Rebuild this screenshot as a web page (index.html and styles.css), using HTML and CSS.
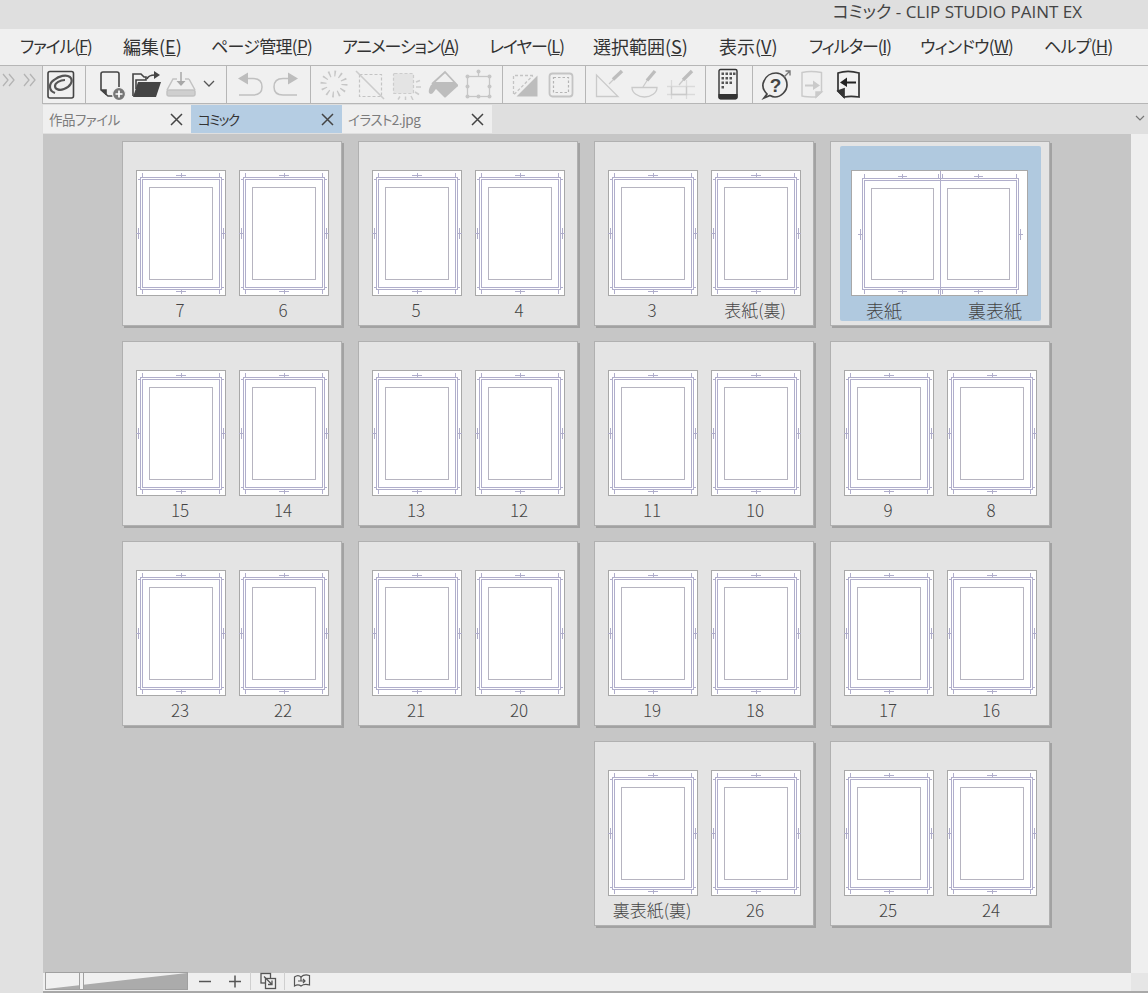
FILE: index.html
```html
<!DOCTYPE html>
<html lang="ja">
  <head>
    <meta charset="UTF-8" />
    <title>コミック - CLIP STUDIO PAINT EX</title>
    <link rel="stylesheet" href="styles.css">
  </head>

  <body>
    <!-- shared page thumbnail and tab close cross -->
    <svg class="defs" width="0" height="0">
      <symbol id="page" viewBox="0 0 90 126">
        <rect x="0.5" y="0.5" width="89" height="125" fill="#fff" stroke="#a8a8a8" />
        <g fill="none" stroke="#b0aecb">
          <rect x="4.5" y="7.5" width="81" height="112" />
          <rect x="6.5" y="9.5" width="77" height="108" />
          <path d="M6.5 3v4M83.5 3v4M6.5 120v4M83.5 120v4M2 9.5h2M86 9.5h2M2 117.5h2M86 117.5h2" />
          <path d="M40 5.5h10M45.5 3v5M40 121.5h10M45.5 119v5M0 63.5h4M2.5 58v11M86 63.5h4M87.5 58v11" />
        </g>
        <rect x="13.5" y="17.5" width="63" height="92" fill="#fff" stroke="#b6b4c0" />
      </symbol>
      <symbol id="cross" viewBox="0 0 13 13">
        <path d="M1 1l11 11M12 1L1 12" fill="none" stroke="#444" stroke-width="1.500" />
      </symbol>
    </svg>

    <header class="titlebar">コミック - CLIP STUDIO PAINT EX</header>

    <nav class="menubar">
      <span class="menu__item menu__item--tight">ファイル(<u>F</u>)</span>
      <span class="menu__item menu__item--wide">編集(<u>E</u>)</span>
      <span class="menu__item menu__item--snug">ページ管理(<u>P</u>)</span>
      <span class="menu__item menu__item--tight">アニメーション(<u>A</u>)</span>
      <span class="menu__item menu__item--tight">レイヤー(<u>L</u>)</span>
      <span class="menu__item menu__item--wide">選択範囲(<u>S</u>)</span>
      <span class="menu__item menu__item--wide">表示(<u>V</u>)</span>
      <span class="menu__item menu__item--tight">フィルター(<u>I</u>)</span>
      <span class="menu__item menu__item--snug">ウィンドウ(<u>W</u>)</span>
      <span class="menu__item menu__item--snug">ヘルプ(<u>H</u>)</span>
    </nav>

    <div class="workspace">
      <aside class="rail">
        <svg width="38" height="14" viewBox="0 0 38 14" fill="none" stroke="#b4b4b4" stroke-width="1.3">
          <path d="M3 1l5 6-5 6M9 1l5 6-5 6M24 1l5 6-5 6M30 1l5 6-5 6" />
        </svg>
      </aside>

      <main class="main">
        <div class="toolbar">
          <div class="tool-group tool-group--logo">
            <span class="tool">
              <svg width="32" height="32" viewBox="0 0 32 32" fill="none" stroke="#444">
                <rect x="3" y="3.500" width="25.500" height="26.500" rx="2" stroke-width="1.600" />
                <path stroke="#555" stroke-width="2.200" d="M10 25C4 23 3 16 9 12C14 8 21 6 25 9C29 13 25 19 19 21C14 23 10 21 10 18C10 15 15 12 20 12" />
              </svg>
            </span>
          </div>
          <div class="tool-group tool-group--file">
            <span class="tool tool--narrow">
              <svg width="32" height="32" viewBox="0 0 32 32" fill="none" stroke="#444" stroke-width="1.600">
                <path d="M19 28H12L5 22V6a2 2 0 0 1 2-2H21a2 2 0 0 1 2 2V19" />
                <path d="M5 22h5v5" fill="#444" />
                <circle cx="23" cy="26" r="6.500" fill="#777" stroke="#f0f0f0" stroke-width="1.200" />
                <path d="M23 22.500v7M19.500 26h7" stroke="#fff" stroke-width="1.700" />
              </svg>
            </span>
            <span class="tool tool--narrow">
              <svg width="32" height="32" viewBox="0 0 32 32">
                <path d="M2 28V6h8l3 3h2v3H5v9" fill="none" stroke="#444" stroke-width="1.600" />
                <path d="M2 29L7 14H30L25 29Z" fill="#444" />
                <path d="M16 11C17 8 19 7 24 7" fill="none" stroke="#444" stroke-width="1.600" />
                <path d="M23 3l6 4-6 4Z" fill="#444" />
              </svg>
            </span>
            <span class="tool tool--narrow">
              <svg width="32" height="32" viewBox="0 0 32 32" fill="none" stroke="#c2c2c2" stroke-width="1.500">
                <path d="M1 22L7 11h4M23 11h-4M23 11l6 11" />
                <rect x="1" y="22" width="28" height="6" rx="2" fill="#cfcfcf" />
                <path d="M15 4v13" stroke="#a8a8a8" />
                <path d="M10.500 13l4.500 5 4.500-5Z" fill="#a8a8a8" stroke="none" />
              </svg>
            </span>
            <span class="tool tool--caret">
              <svg width="12" height="8" viewBox="0 0 12 8" fill="none" stroke="#555" stroke-width="1.300">
                <path d="M1 1l5 5 5-5" />
              </svg>
            </span>
          </div>
          <div class="tool-group">
            <span class="tool">
              <svg width="32" height="32" viewBox="0 0 32 32" fill="none" stroke="#c0c0c0" stroke-width="1.500">
                <path d="M4 10.500L14 4.500V16.500Z" fill="#bdbdbd" stroke="none" />
                <path d="M14 10.500H19C25 10.500 28 14 28 19C28 24 25 27 19 27H5" />
              </svg>
            </span>
            <span class="tool">
              <svg width="32" height="32" viewBox="0 0 32 32" fill="none" stroke="#c0c0c0" stroke-width="1.500">
                <path d="M28 10.500L18 4.500V16.500Z" fill="#bdbdbd" stroke="none" />
                <path d="M18 10.500H13C7 10.500 4 14 4 19C4 24 7 27 13 27H27" />
              </svg>
            </span>
          </div>
          <div class="tool-group">
            <span class="tool">
              <svg width="32" height="32" viewBox="0 0 32 32" fill="none" stroke="#c6c6c6">
                <circle cx="16" cy="16" r="10.500" stroke-width="6" stroke-dasharray="1.500 4" />
              </svg>
            </span>
            <span class="tool">
              <svg width="32" height="32" viewBox="0 0 32 32" fill="none" stroke="#c4c4c4">
                <rect x="5.500" y="6.500" width="22" height="22" stroke-dasharray="3 2" stroke-width="1.200" />
                <path d="M2 3l28 28" stroke-width="1.600" stroke="#cccccc" />
              </svg>
            </span>
            <span class="tool">
              <svg width="32" height="32" viewBox="0 0 32 32" fill="none" stroke="#cccccc">
                <rect x="3.500" y="5.500" width="20" height="20" rx="1" fill="#e4e4e4" stroke-dasharray="3 2" stroke-width="1.200" />
                <path stroke-width="1.500" d="M26 14l4-1.500M26 19h5M25 24l4 2.500M21 28l2 4M15.500 28.500v3.500M10 28.500l-2 3" />
              </svg>
            </span>
            <span class="tool">
              <svg width="32" height="32" viewBox="0 0 32 32">
                <path d="M6 16L19 4L32 18" fill="none" stroke="#bdbdbd" stroke-width="1.800" />
                <path d="M9 14H28L32 18L20 29Q19 30 18 29L10 21C8 23 7 26 5 26C2 26 2 22 5 17Z" fill="#bdbdbd" />
              </svg>
            </span>
            <span class="tool">
              <svg width="32" height="32" viewBox="0 0 32 32" fill="#c6c6c6" stroke="#c6c6c6">
                <rect x="5.500" y="8.500" width="22" height="20" fill="none" stroke-width="1.300" />
                <path d="M16.500 4v4" stroke-width="1.300" />
                <circle cx="16.500" cy="3.500" r="2" stroke="none" />
                <circle cx="5.500" cy="8.500" r="2" stroke="none" />
                <circle cx="27.500" cy="8.500" r="2" stroke="none" />
                <circle cx="5.500" cy="18.500" r="2" stroke="none" />
                <circle cx="27.500" cy="18.500" r="2" stroke="none" />
                <circle cx="5.500" cy="28.500" r="2" stroke="none" />
                <circle cx="16.500" cy="28.500" r="2" stroke="none" />
                <circle cx="27.500" cy="28.500" r="2" stroke="none" />
              </svg>
            </span>
          </div>
          <div class="tool-group tool-group--tight">
            <span class="tool">
              <svg width="32" height="32" viewBox="0 0 32 32" fill="none" stroke="#c4c4c4">
                <path d="M24 7.500H4.500V27L24 7.500" stroke-dasharray="3 2" stroke-width="1.300" />
                <path d="M28.500 7.500V28.500H7.500Z" fill="#bdbdbd" stroke="none" />
              </svg>
            </span>
            <span class="tool">
              <svg width="32" height="32" viewBox="0 0 32 32" fill="none" stroke="#c4c4c4">
                <rect x="4.500" y="5.500" width="23" height="23" rx="3" stroke-width="1.800" />
                <rect x="8.500" y="9.500" width="15" height="15" stroke="#b4b4b4" stroke-dasharray="2.500 2" stroke-width="1.200" />
              </svg>
            </span>
          </div>
          <div class="tool-group">
            <span class="tool">
              <svg width="32" height="32" viewBox="0 0 32 32" fill="none" stroke="#cacaca" stroke-width="1.300">
                <path d="M3.500 7V28.500H25Z" />
                <path d="M16 16l6-6" />
                <path d="M20 11.500L29 3" stroke="#bdbdbd" stroke-width="3.400" />
              </svg>
            </span>
            <span class="tool">
              <svg width="32" height="32" viewBox="0 0 32 32" fill="none" stroke="#cacaca" stroke-width="1.300">
                <path d="M3 19.500H28C28 25 22 29 15.500 29C9 29 3 25 3 19.500Z" />
                <path d="M14 19l5-8" />
                <path d="M18 12.500L26 3" stroke="#bdbdbd" stroke-width="3.400" />
              </svg>
            </span>
            <span class="tool">
              <svg width="32" height="32" viewBox="0 0 32 32" fill="none" stroke="#dadada" stroke-width="1.300">
                <path d="M2 18.500H30M2 26.500H30M6.500 12V31M21.500 12V31" />
                <path d="M6.500 18.500V26.500H21.500V18.500" stroke="#cacaca" />
                <path d="M14 17l5-6" stroke="#cacaca" />
                <path d="M18 12L27 3" stroke="#bdbdbd" stroke-width="3.400" />
              </svg>
            </span>
          </div>
          <div class="tool-group tool-group--tight">
            <span class="tool">
              <svg width="32" height="32" viewBox="0 0 32 32" fill="#555">
                <rect x="7" y="1.500" width="18" height="29" rx="1.500" fill="none" stroke="#333" stroke-width="1.400" />
                <path d="M6.500 26H25.500V29.500a2 2 0 0 1-2 2H8.500a2 2 0 0 1-2-2Z" fill="#333" />
                <path d="M9.500 4.500h2.500v2.500h-2.500zM13.500 4.500h2.500v2.500h-2.500zM17.500 4.500h2.500v2.500h-2.500zM21 4.500h2.500v2.500H21z" />
                <path d="M9.500 9h2.500v2.500h-2.500zM13.500 9h2.500v2.500h-2.500zM17.500 9h2.500v2.500h-2.500z" />
                <path d="M9.500 13.500h2.500v2.500h-2.500zM13.500 13.500h2.500v2.500h-2.500zM17.500 13.500h2.500v2.500h-2.500z" />
                <path d="M9.500 18h2.500v2.500h-2.500z" />
              </svg>
            </span>
          </div>
          <div class="tool-group">
            <span class="tool">
              <svg width="32" height="32" viewBox="0 0 32 32" fill="none" stroke="#444" stroke-width="1.700">
                <path d="M7 26C3 22 2 17 4 13C6 8 11 5 16 5C22 5 27 10 27 17C27 23 21 29 15 29C12 29 11 28 10 27.500L4 30Z" />
                <text class="tool__glyph" x="15.500" y="24" text-anchor="middle" stroke="none" fill="#444">?</text>
                <path d="M24 9l6-6M25.500 3H30V7.500" stroke="#777" stroke-width="1.400" />
              </svg>
            </span>
            <span class="tool">
              <svg width="32" height="32" viewBox="0 0 32 32" fill="none" stroke="#cacaca" stroke-width="1.500">
                <path d="M6 4.500C12 3 18 3 25.500 4.500V24L20 29C15 29 10 29 6 28Z" />
                <path d="M9 16.500H17V12.500L24 17.500L17 22V18.500H9Z" fill="#cacaca" stroke="none" />
                <path d="M20 29V24H25.500Z" fill="#cacaca" />
              </svg>
            </span>
            <span class="tool">
              <svg width="32" height="32" viewBox="0 0 32 32" fill="none" stroke="#333" stroke-width="1.700">
                <path d="M6 5C12 3 20 3 27 5V29C21 28 17 28 12 29L6 23Z" />
                <path d="M6 23L12 21V29Z" fill="#333" />
                <path d="M24 13.500H15V9.500L8 14.500L15 19V15.500H24Z" fill="#222" stroke="none" />
              </svg>
            </span>
          </div>
        </div>

        <div class="tabs">
          <div class="tab"><span>作品ファイル</span><svg class="tab__close"><use href="#cross" /></svg></div>
          <div class="tab tab--active"><span>コミック</span><svg class="tab__close"><use href="#cross" /></svg></div>
          <div class="tab"><span>イラスト2.jpg</span><svg class="tab__close"><use href="#cross" /></svg></div>
          <svg class="tabs__more" width="10" height="6" viewBox="0 0 10 6" fill="none" stroke="#777" stroke-width="1.200">
            <path d="M1 1l4 4 4-4" />
          </svg>
        </div>

        <div class="view">
          <section class="canvas">
            <article class="card">
              <figure class="page"><svg class="thumb"><use href="#page" /></svg><figcaption>7</figcaption></figure>
              <figure class="page"><svg class="thumb"><use href="#page" /></svg><figcaption>6</figcaption></figure>
            </article>
            <article class="card">
              <figure class="page"><svg class="thumb"><use href="#page" /></svg><figcaption>5</figcaption></figure>
              <figure class="page"><svg class="thumb"><use href="#page" /></svg><figcaption>4</figcaption></figure>
            </article>
            <article class="card">
              <figure class="page"><svg class="thumb"><use href="#page" /></svg><figcaption>3</figcaption></figure>
              <figure class="page"><svg class="thumb"><use href="#page" /></svg><figcaption>表紙(裏)</figcaption></figure>
            </article>
            <article class="card card--spread">
              <div class="spread">
                <svg class="spread__thumb" width="177" height="126" viewBox="0 0 177 126">
                  <rect x="0.5" y="0.5" width="176" height="125" fill="#fff" stroke="#a8a8a8" />
                  <g fill="none" stroke="#b0aecb" transform="translate(1 0)">
                    <rect x="10.500" y="8.500" width="156" height="111" />
                    <rect x="12.500" y="10.500" width="152" height="107" />
                    <path d="M88.500 1v125M86.500 4v4M90.500 4v4M86.500 120v4M90.500 120v4M12.500 4v4M164.500 4v4M12.500 120v4M164.500 120v4" />
                    <path d="M46 6.500h9M50.500 4v5M122 6.500h9M126.500 4v5M46 121.500h9M50.500 119v5M122 121.500h9M126.500 119v5" />
                    <path d="M6 64.500h4M8.500 59v11M167 64.500h4M168.500 59v11" />
                  </g>
                  <rect x="20.500" y="18.500" width="62" height="91" fill="#fff" stroke="#b6b4c0" />
                  <rect x="96.500" y="18.500" width="62" height="91" fill="#fff" stroke="#b6b4c0" />
                </svg>
                <div class="spread__labels">
                  <span>表紙</span>
                  <span>裏表紙</span>
                </div>
              </div>
            </article>

            <article class="card">
              <figure class="page"><svg class="thumb"><use href="#page" /></svg><figcaption>15</figcaption></figure>
              <figure class="page"><svg class="thumb"><use href="#page" /></svg><figcaption>14</figcaption></figure>
            </article>
            <article class="card">
              <figure class="page"><svg class="thumb"><use href="#page" /></svg><figcaption>13</figcaption></figure>
              <figure class="page"><svg class="thumb"><use href="#page" /></svg><figcaption>12</figcaption></figure>
            </article>
            <article class="card">
              <figure class="page"><svg class="thumb"><use href="#page" /></svg><figcaption>11</figcaption></figure>
              <figure class="page"><svg class="thumb"><use href="#page" /></svg><figcaption>10</figcaption></figure>
            </article>
            <article class="card">
              <figure class="page"><svg class="thumb"><use href="#page" /></svg><figcaption>9</figcaption></figure>
              <figure class="page"><svg class="thumb"><use href="#page" /></svg><figcaption>8</figcaption></figure>
            </article>

            <article class="card">
              <figure class="page"><svg class="thumb"><use href="#page" /></svg><figcaption>23</figcaption></figure>
              <figure class="page"><svg class="thumb"><use href="#page" /></svg><figcaption>22</figcaption></figure>
            </article>
            <article class="card">
              <figure class="page"><svg class="thumb"><use href="#page" /></svg><figcaption>21</figcaption></figure>
              <figure class="page"><svg class="thumb"><use href="#page" /></svg><figcaption>20</figcaption></figure>
            </article>
            <article class="card">
              <figure class="page"><svg class="thumb"><use href="#page" /></svg><figcaption>19</figcaption></figure>
              <figure class="page"><svg class="thumb"><use href="#page" /></svg><figcaption>18</figcaption></figure>
            </article>
            <article class="card">
              <figure class="page"><svg class="thumb"><use href="#page" /></svg><figcaption>17</figcaption></figure>
              <figure class="page"><svg class="thumb"><use href="#page" /></svg><figcaption>16</figcaption></figure>
            </article>

            <article class="card card--third">
              <figure class="page"><svg class="thumb"><use href="#page" /></svg><figcaption>裏表紙(裏)</figcaption></figure>
              <figure class="page"><svg class="thumb"><use href="#page" /></svg><figcaption>26</figcaption></figure>
            </article>
            <article class="card">
              <figure class="page"><svg class="thumb"><use href="#page" /></svg><figcaption>25</figcaption></figure>
              <figure class="page"><svg class="thumb"><use href="#page" /></svg><figcaption>24</figcaption></figure>
            </article>
          </section>
          <div class="vscroll"></div>
        </div>

        <footer class="statusbar">
          <svg class="zoom-slider" width="143" height="18" viewBox="0 0 143 18">
            <rect x="0.5" y="0.5" width="142" height="17" fill="#f0f0f0" stroke="#a0a0a0" />
            <path d="M1 17L142 1V17Z" fill="#ababab" />
            <rect x="34.500" y="0.5" width="4" height="17" fill="#f0f0f0" stroke="#a0a0a0" />
          </svg>
          <span class="status-btn">
            <svg width="14" height="14" viewBox="0 0 14 14" stroke="#555" stroke-width="1.500"><path d="M1 7.500h12" /></svg>
          </span>
          <span class="status-btn">
            <svg width="14" height="14" viewBox="0 0 14 14" stroke="#555" stroke-width="1.500"><path d="M1 7.500h12M7 1.500v12" /></svg>
          </span>
          <span class="status-btn status-btn--sep">
            <svg width="18" height="18" viewBox="0 0 18 18" fill="none" stroke="#555" stroke-width="1.300">
              <rect x="2" y="1.500" width="9.500" height="9.500" />
              <rect x="6.500" y="6.500" width="10" height="10" fill="#f0f0f0" />
              <path d="M5 4.500l8 8M9 12.500h4V8.500" />
            </svg>
          </span>
          <span class="status-btn status-btn--sep">
            <svg width="18" height="18" viewBox="0 0 18 18" fill="none" stroke="#555" stroke-width="1.200">
              <path d="M1.500 5C4 3 6 3 8 5C10 3 13 2.500 16.500 3.500V13C13 12 10 12.500 8 14C6 12.500 4 12.500 1.500 14Z" />
              <path d="M8 5V9M5 9h7M10 7l2 2-2 2" />
            </svg>
          </span>
          <span class="statusbar__corner"></span>
        </footer>
      </main>
    </div>
  </body>
</html>
```

FILE: styles.css
```css
* {
  box-sizing: border-box;
}

body {
  margin: 0;
  width: 1148px;
  height: 993px;
  overflow: hidden;
  display: flex;
  flex-direction: column;
  background-color: #e1e1e1;
  font-family: "Noto Sans CJK JP", "Noto Sans", sans-serif;
  font-feature-settings: "palt";
}

.defs {
  position: absolute;
}

/* title + menu */
.titlebar {
  height: 29px;
  padding-right: 66px;
  background-color: #dfdfdf;
  color: #444;
  font-family: "Open Sans", "Noto Sans CJK JP", sans-serif;
  font-size: 17px;
  line-height: 24px;
  text-align: right;
}

.menubar {
  height: 36px;
  display: flex;
  padding-left: 20px;
  background-color: #f0f0f0;
  color: #333;
  font-size: 17px;
}

.menu__item {
  flex: none;
  white-space: nowrap;
  line-height: 34px;
}

.menu__item--wide {
  font-size: 18px;
}

.menu__item--snug {
  letter-spacing: -0.7px;
}

.menu__item--tight {
  letter-spacing: -1.15px;
}

.menu__item:nth-child(1) { width: 103px; }
.menu__item:nth-child(2) { width: 88px; }
.menu__item:nth-child(3) { width: 131px; }
.menu__item:nth-child(4) { width: 147px; }
.menu__item:nth-child(5) { width: 104px; }
.menu__item:nth-child(6) { width: 126px; }
.menu__item:nth-child(7) { width: 90px; }
.menu__item:nth-child(8) { width: 111px; }
.menu__item:nth-child(9) { width: 124px; }

/* layout */
.workspace {
  flex: 1;
  display: flex;
  min-height: 0;
  border-top: 1px solid #b6b6b6;
}

.rail {
  flex: none;
  width: 42px;
  padding-top: 7px;
  background-color: #e1e1e1;
}

.rail svg {
  display: block;
}

.main {
  flex: 1;
  min-width: 0;
  display: flex;
  flex-direction: column;
}

/* toolbar */
.toolbar {
  flex: none;
  height: 38px;
  display: flex;
  background-color: #f0f0f0;
  border-left: 1px solid #b6b6b6;
  border-bottom: 1px solid #b6b6b6;
}

.tool-group {
  display: flex;
  align-items: center;
  padding: 0 6px 0 5px;
  border-right: 1px solid #b6b6b6;
}

.tool-group:last-child {
  border-right: 0;
}

.tool-group--logo {
  width: 43px;
  padding: 0;
}

.tool-group--file {
  width: 141px;
  padding-left: 8px;
}

.tool-group--tight {
  padding-left: 4px;
}

.tool {
  width: 36px;
  height: 37px;
  padding-bottom: 2px;
  display: flex;
  align-items: center;
  justify-content: center;
}

.tool--narrow {
  width: 35px;
}

.tool--caret {
  width: 20px;
}

.tool__glyph {
  font-family: "Liberation Sans", sans-serif;
  font-size: 19px;
  font-weight: 700;
}

/* tabs */
.tabs {
  flex: none;
  position: relative;
  height: 30px;
  display: flex;
  padding: 1px 0 1px 1px;
  background-color: #dfdfdf;
}

.tab {
  width: 150px;
  height: 28px;
  display: flex;
  align-items: center;
  justify-content: space-between;
  padding: 0 8px 0 6px;
  background-color: #efefef;
  color: #7c7c7c;
  font-size: 13.5px;
  letter-spacing: -0.5px;
}

.tab:first-child {
  width: 148px;
}

.tab--active {
  width: 151px;
  padding-left: 7px;
  background-color: #b5cde3;
  color: #333;
  letter-spacing: -1.6px;
}

.tab__close {
  width: 13px;
  height: 13px;
}

.tabs__more {
  position: absolute;
  right: 3px;
  top: 11px;
}

/* page grid */
.view {
  flex: 1;
  min-height: 0;
  display: flex;
  margin-left: 1px;
}

.canvas {
  flex: 1;
  display: grid;
  grid-template-columns: repeat(4, 220px);
  grid-auto-rows: 185px;
  column-gap: 16px;
  row-gap: 15px;
  align-content: start;
  padding: 7px 0 0 79px;
  background-color: #c6c6c6;
}

.vscroll {
  flex: none;
  width: 17px;
  background-color: #efefef;
}

.card {
  display: flex;
  gap: 13px;
  padding: 28px 0 0 13px;
  background-color: #e4e4e4;
  border: 1px solid #b0b0b0;
  box-shadow: 2px 2px 0 #a2a2a2;
}

.card--third {
  grid-column: 3;
}

.card--spread {
  padding: 4px 0 0 9px;
}

.page {
  width: 90px;
  margin: 0;
}

.thumb {
  display: block;
  width: 90px;
  height: 126px;
  shape-rendering: crispEdges;
}

.page figcaption {
  padding-right: 2px;
  color: #444;
  font-size: 17px;
  font-weight: 300;
  line-height: 28px;
  text-align: center;
  white-space: nowrap;
}

.spread {
  width: 201px;
  height: 175px;
  padding: 24px 0 0 11px;
  background-color: #b0c9df;
  border-radius: 2px;
}

.spread__thumb {
  display: block;
  shape-rendering: crispEdges;
}

.spread__labels {
  display: flex;
  justify-content: space-between;
  padding: 0 19px 0 15px;
  color: #444;
  font-size: 18px;
  font-weight: 300;
  line-height: 28px;
}

/* bottom bar */
.statusbar {
  flex: none;
  height: 20px;
  margin-left: 1px;
  display: flex;
  align-items: center;
  padding: 0 0 2px 2px;
  background-color: #efefef;
  border-bottom: 2px solid #a8a8a8;
}

.zoom-slider {
  display: block;
  margin-right: 2px;
}

.status-btn {
  width: 30px;
  height: 18px;
  display: flex;
  align-items: center;
  justify-content: center;
}

.status-btn--sep {
  width: 34px;
  border-left: 1px solid #cfcfcf;
}

.statusbar__corner {
  align-self: stretch;
  width: 17px;
  margin: 0 0 -2px auto;
  background-color: #e6e6e6;
}
```
